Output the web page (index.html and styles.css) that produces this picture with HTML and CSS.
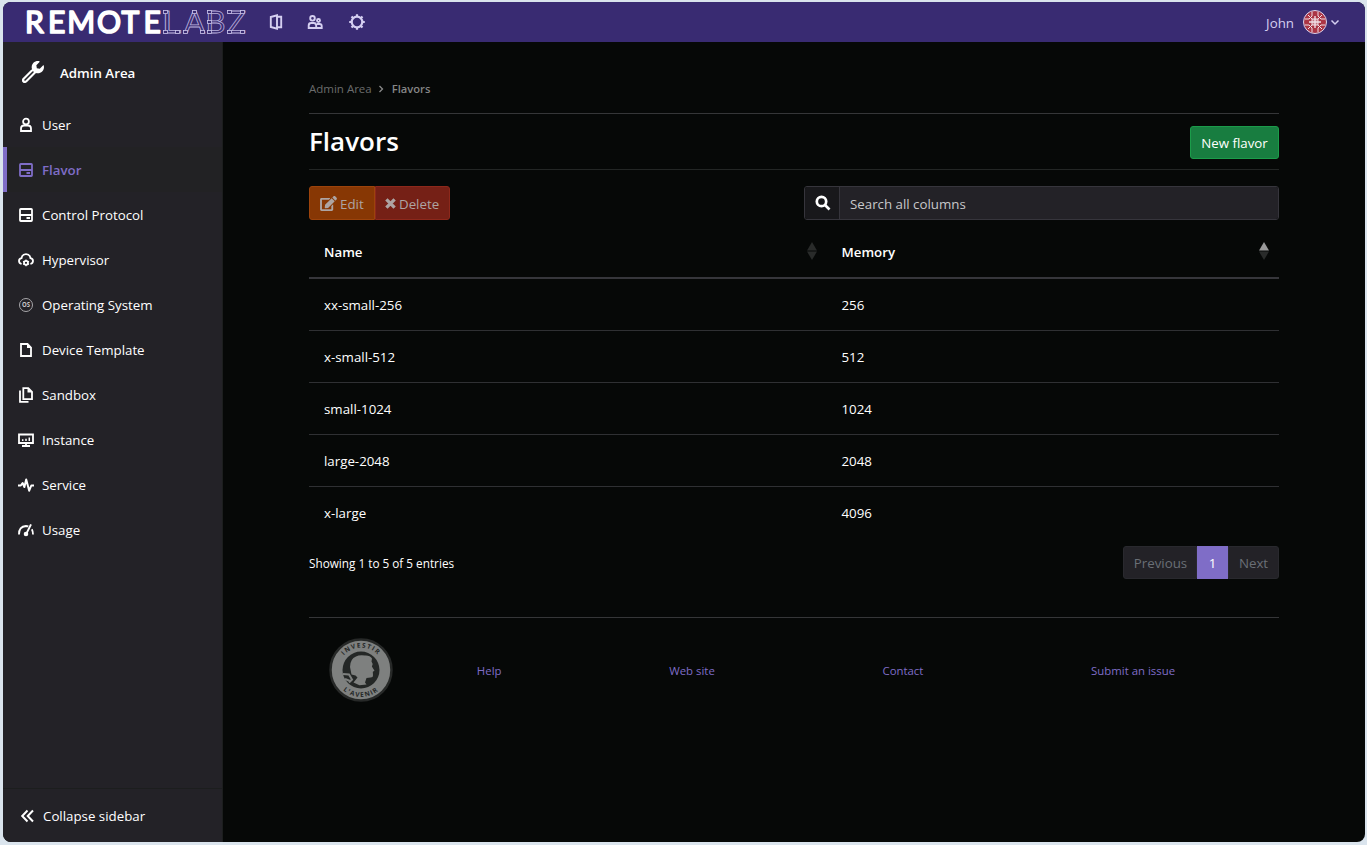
FILE: index.html
```html
<!DOCTYPE html>
<html lang="en">
<head>
<meta charset="utf-8">
<title>Flavors - RemoteLabz</title>
<link rel="stylesheet" href="styles.css">
</head>
<body>
<div class="window">
  <header class="navbar">
    <svg class="logo" width="226" height="32" viewBox="0 0 226 32">
      <text class="logo-bold" x="1.900 25 44.200 74 98.500 120.600" y="26.800">REMOTE</text>
      <g class="logo-thin">
        <text x="139" y="27" textLength="19" lengthAdjust="spacingAndGlyphs">L</text>
        <text x="161" y="27" textLength="21" lengthAdjust="spacingAndGlyphs">A</text>
        <text x="182.500" y="27" textLength="20" lengthAdjust="spacingAndGlyphs">B</text>
        <text x="204" y="27" textLength="19" lengthAdjust="spacingAndGlyphs">Z</text>
      </g>
      <g class="logo-nodes">
        <rect x="140.500" y="4.500" width="4" height="3"/><rect x="140.500" y="24.500" width="4" height="3"/><rect x="152.500" y="24.500" width="4" height="3"/>
        <rect x="160.500" y="24.500" width="4" height="3"/><rect x="169.500" y="4.500" width="4" height="3"/><rect x="177.500" y="24.500" width="4" height="3"/>
        <rect x="184.500" y="4.500" width="4" height="3"/><rect x="184.500" y="14.500" width="4" height="3"/><rect x="184.500" y="24.500" width="4" height="3"/>
        <rect x="204.500" y="4.500" width="4" height="3"/><rect x="217.500" y="4.500" width="4" height="3"/><rect x="204.500" y="24.500" width="4" height="3"/><rect x="217.500" y="24.500" width="4" height="3"/>
      </g>
    </svg>
    <nav class="top-links">
      <svg width="16" height="16" viewBox="0 0 16 16" class="stroke door"><path d="M2.800 3 9 1.300v13.400L2.800 13z"/><path d="M9 2.700h4.200v10.600H9"/></svg>
      <svg width="16" height="16" viewBox="0 0 16 16" class="stroke"><circle cx="4.500" cy="4.300" r="2.300"/><path d="M.7 14v-2.500q0-2.500 2.500-2.500h2.500q2.500 0 2.500 2.500V14z"/><circle cx="10.500" cy="6.500" r="1.500"/><path d="M9 10h2.500q2.200 0 2.200 2v2H8.500"/></svg>
      <svg width="18" height="18" viewBox="0 0 18 18" class="stroke gear"><circle cx="9" cy="9" r="5.300"/><path d="M9 1.200v2M9 14.800v2M1.200 9h2M14.800 9h2M3.500 3.500l1.400 1.400M13.100 13.100l1.400 1.400M3.500 14.500l1.400-1.400M13.100 4.900l1.400-1.400"/></svg>
    </nav>
    <div class="account">
      <span>John</span>
      <svg class="avatar" width="24" height="24" viewBox="0 0 24 24">
        <circle cx="12" cy="12" r="11.500" fill="#ab3545" stroke="#d9d4ee"/>
        <g fill="none" stroke="#f0dfe6" stroke-width="1"><path stroke-width="1.400" d="M12 6v12M6 12h12"/><path d="M9 2v4l-3 3H2M15 2v4l3 3h4M9 22v-4l-3-3H2M15 22v-4l3-3h4M5 5l4 4M19 5l-4 4M5 19l4-4M19 19l-4-4"/><rect x="9" y="9" width="6" height="6" fill="#f0dfe6" fill-opacity=".4"/></g>
      </svg>
      <svg width="10" height="7" viewBox="0 0 10 7" class="caret"><path d="M1.500 1.500 5 5l3.500-3.500"/></svg>
    </div>
  </header>
  <div class="body">
    <aside class="sidebar">
      <div class="side-title">
        <svg width="22" height="22" viewBox="0 0 512 512"><path fill="#fff" d="M507.730 109.100c-2.240-9.030-13.540-12.090-20.120-5.510l-74.360 74.360-67.880-11.310-11.310-67.880 74.360-74.360c6.620-6.620 3.430-17.900-5.660-20.160-47.380-11.740-99.550.910-136.580 37.930-39.640 39.640-50.550 97.100-34.050 147.200L18.740 402.760c-24.990 24.990-24.990 65.510 0 90.500 24.990 24.990 65.510 24.990 90.500 0l213.210-213.210c50.120 16.710 107.470 5.680 147.370-34.220 37.070-37.070 49.700-89.320 37.910-136.730z"/><path fill="none" stroke="#fff" stroke-width="40" stroke-linejoin="round" d="M232 218 30 420q-20 35 5 60 30 20 62-5L310 262"/><path stroke="#232227" stroke-width="38" stroke-linecap="round" d="M70 442 255 257"/></svg>
        <span>Admin Area</span>
      </div>
      <nav class="side-nav">
        <a class="side-item"><svg width="16" height="16" viewBox="0 0 16 16"><circle cx="8" cy="4.600" r="2.900"/><path d="M3 14v-2.500Q3 8.500 6 8.500h4q3 0 3 3V14z"/></svg><span>User</span></a>
        <a class="side-item active"><svg width="16" height="16" viewBox="0 0 16 16"><rect x="2" y="2" width="12" height="12" rx=".8"/><path d="M2 8h12"/><path d="M8.500 11h3.500"/></svg><span>Flavor</span></a>
        <a class="side-item"><svg width="16" height="16" viewBox="0 0 16 16"><rect x="2" y="2" width="12" height="12" rx=".8"/><path d="M2 8h12"/><path d="M8.500 11h3.500"/></svg><span>Control Protocol</span></a>
        <a class="side-item"><svg width="16" height="16" viewBox="0 0 16 16"><path d="M3.600 12Q1 11.300 1 9q0-2.300 2.500-2.800Q4.300 2.200 8 2.200t4.500 4Q15 6.700 15 9q0 2.300-2.600 3"/><circle cx="8" cy="10.800" r="2"/><path stroke-width="1.200" d="M8 7.500v2M8 12.200v2M5.100 9.200l1.500.9M9.500 11.600l1.500.8M5.100 12.400l1.500-.8M9.500 10.100l1.500-.9"/></svg><span>Hypervisor</span></a>
        <a class="side-item"><svg class="os" width="16" height="16" viewBox="0 0 16 16"><circle cx="8" cy="8" r="6.500"/><text x="4" y="10.200" textLength="8" lengthAdjust="spacingAndGlyphs">OS</text></svg><span>Operating System</span></a>
        <a class="side-item"><svg width="16" height="16" viewBox="0 0 16 16"><path d="M3 2h6.500L13 5.500V14H3z"/><path fill="#fff" stroke="none" d="M9 1.500v4.500h4.500z"/></svg><span>Device Template</span></a>
        <a class="side-item"><svg width="16" height="16" viewBox="0 0 16 16"><path d="M5.300 1.200h5L14 4.800v7.400H5.300zM2 3.500v11.300h8.500"/><path fill="#fff" stroke="none" d="M9.500 1v4.500H14z"/></svg><span>Sandbox</span></a>
        <a class="side-item"><svg width="16" height="16" viewBox="0 0 16 16"><path d="M1 2.500h14v8.500H1zM8 11v3M4 14h8"/><path stroke-width="1.500" d="M4.700 9V7.200M8 9V6.700M11.300 9V5.500"/></svg><span>Instance</span></a>
        <a class="side-item"><svg width="16" height="16" viewBox="0 0 16 16"><path stroke-width="2" stroke-linejoin="round" d="M0 8.500h2.800L4.600 6l1.800 4L8.200 2.500l3 11.200 2.100-5.200H16"/></svg><span>Service</span></a>
        <a class="side-item"><svg width="16" height="16" viewBox="0 0 16 16"><path d="M1 12.500Q.8 4.500 8 4q1.300 0 2.300.4M13.800 7.200q1.200 2 1.200 5.300"/><path stroke-width="1.900" d="M13 2.300 8.200 12"/><circle cx="8" cy="12" r="1.400" fill="#fff"/></svg><span>Usage</span></a>
      </nav>
      <div class="collapse"><svg width="14" height="14" viewBox="0 0 14 14"><path d="M6.500 1.500 1.200 7l5.300 5.500M12 1.500 6.700 7l5.300 5.500"/></svg><span>Collapse sidebar</span></div>
    </aside>
    <main class="main">
      <div class="content">
        <div class="breadcrumb"><span class="crumb">Admin Area</span><svg width="6" height="8" viewBox="0 0 6 8"><path d="M1.500 1 4.500 4l-3 3"/></svg><span class="here">Flavors</span></div>
        <div class="heading"><h1>Flavors</h1><a class="btn-new"><span>New flavor</span></a></div>
        <div class="toolbar">
          <div class="btn-group">
            <a class="btn-edit"><svg width="17" height="15" viewBox="0 0 576 512"><path d="M402.600 83.200l90.200 90.200c3.800 3.800 3.800 10 0 13.800L274.400 405.600l-92.800 10.300c-12.400 1.400-22.900-9.100-21.500-21.500l10.300-92.800L388.800 83.200c3.800-3.800 10-3.800 13.800 0zm162-22.900l-48.800-48.800c-15.200-15.200-39.900-15.200-55.200 0l-35.400 35.400c-3.800 3.800-3.800 10 0 13.800l90.200 90.200c3.800 3.800 10 3.800 13.800 0l35.400-35.400c15.200-15.300 15.200-40 0-55.200zM384 346.200V448H64V128h229.800c3.200 0 6.200-1.300 8.500-3.500l40-40c7.600-7.600 2.200-20.500-8.500-20.500H48C21.500 64 0 85.500 0 112v352c0 26.500 21.500 48 48 48h352c26.500 0 48-21.500 48-48V306.200c0-10.700-12.900-16-20.500-8.500l-40 40c-2.200 2.300-3.500 5.300-3.500 8.500z"/></svg><span>Edit</span></a>
            <a class="btn-delete"><svg width="11" height="11" viewBox="0 0 12 12"><path stroke="#ada4a3" stroke-width="3.600" d="M1.500 1.500l9 9M10.500 1.500l-9 9"/></svg><span>Delete</span></a>
          </div>
          <div class="search">
            <div class="search-icon"><svg width="16" height="16" viewBox="0 0 16 16"><circle cx="6.500" cy="6.500" r="4.700"/><path d="M10 10l4.500 4.500"/></svg></div>
            <div class="search-field"><span>Search all columns</span></div>
          </div>
        </div>
        <div class="table">
          <div class="row head"><div class="cell"><span>Name</span><svg class="sort" width="10" height="18" viewBox="0 0 10 18"><path d="M5 0l5 8.500H0z"/><path d="M0 9.500h10L5 18z"/></svg></div><div class="cell"><span>Memory</span><svg class="sort asc" width="10" height="18" viewBox="0 0 10 18"><path d="M5 0l5 8.500H0z"/><path d="M0 9.500h10L5 18z"/></svg></div></div>
          <div class="row"><div class="cell"><span>xx-small-256</span></div><div class="cell"><span>256</span></div></div>
          <div class="row"><div class="cell"><span>x-small-512</span></div><div class="cell"><span>512</span></div></div>
          <div class="row"><div class="cell"><span>small-1024</span></div><div class="cell"><span>1024</span></div></div>
          <div class="row"><div class="cell"><span>large-2048</span></div><div class="cell"><span>2048</span></div></div>
          <div class="row"><div class="cell"><span>x-large</span></div><div class="cell"><span>4096</span></div></div>
        </div>
        <div class="table-foot">
          <span class="info">Showing 1 to 5 of 5 entries</span>
          <div class="pages"><a class="prev">Previous</a><a class="current">1</a><a class="next">Next</a></div>
        </div>
        <footer class="footer">
          <svg width="64" height="64" viewBox="0 0 64 64">
            <defs><path id="arc-top" d="M9.500 32a22.500 22.500 0 0 1 45 0"/><path id="arc-bottom" d="M5 32a27 27 0 0 0 54 0"/></defs>
            <circle cx="32" cy="32" r="30.500" fill="#7e807f" stroke="#272928" stroke-width="2.500"/>
            <circle cx="32" cy="32" r="18.500" fill="#242726"/>
            <path fill="#7e807f" d="M21 29q0-8 6-10.500 3-1.700 9-1 5-.3 7 3l-.5 3 1.200 2.500-.8 2.500 2.600 4.200-1.700 1 .2 3.300q.2 2.500-2.500 2.500l-4 .5-1.500 4.500 1.500 2-7 .8-6-2.800 4-5-2-2-4-1z"/>
            <path fill="none" stroke="#7e807f" stroke-width="2" d="M14 36l6 .5 3 5-3 3M16 41l5 2"/>
            <text class="stamp"><textPath href="#arc-top" startOffset="50%">INVESTIR</textPath></text>
            <text class="stamp"><textPath href="#arc-bottom" startOffset="50%">L'AVENIR</textPath></text>
          </svg>
          <nav class="foot-links"><a>Help</a><a>Web site</a><a>Contact</a><a>Submit an issue</a></nav>
        </footer>
      </div>
    </main>
  </div>
</div>
</body>
</html>
```
FILE: styles.css
```css
* { box-sizing: border-box; }
html, body { height: 100%; }
body { margin: 0; padding: 2px 2px 3px 3px; background: #dae4ed; color: #fff; font: 13.3px/21px "Open Sans", "Noto Sans", sans-serif; overflow: hidden; }
h1 { margin: 0; }
svg { display: block; flex: none; overflow: visible; }
.window { height: 100%; display: flex; flex-direction: column; border-radius: 8px; overflow: hidden; background: #060807; }

.navbar { height: 40px; flex: none; display: flex; align-items: center; background: #392b72; color: #d5cff1; padding: 0 25px 0 20px; }
.logo { font-family: Lato, sans-serif; }
.logo-bold { font-size: 30px; font-weight: 400; fill: #fff; stroke: #fff; stroke-width: 1.7px; stroke-linejoin: round; }
.logo-thin { font-size: 30px; font-weight: 400; fill: none; stroke: #b9b0dd; stroke-width: .8px; }
.logo-nodes { fill: #392b72; stroke: #cdc5ec; stroke-width: .8px; }
.top-links { display: flex; align-items: center; gap: 24px; margin-left: 19px; }
.stroke { fill: none; stroke: #d5cff1; stroke-width: 1.9; }
.gear { stroke-width: 2.200; }
.account { margin-left: auto; display: flex; align-items: center; gap: 9px; }
.account .caret { margin-left: -6px; }
.caret { fill: none; stroke: #d5cff1; stroke-width: 1.5; }

.account span, .side-title span, .side-item span, .collapse span, .btn-new span, .btn-group span, .search-field span, .cell span, .pages a { padding-top: 2px; }

.body { flex: 1; display: flex; min-height: 0; }
.sidebar { width: 220px; flex: none; display: flex; flex-direction: column; background: #232227; border-right: 1px solid #1c1e1e; }
.side-title { height: 60px; display: flex; align-items: center; gap: 16px; padding-left: 19px; font-weight: 600; }
.side-nav { flex: 1; }
.side-item { height: 45px; display: flex; align-items: center; gap: 8px; padding-left: 11px; border-left: 4px solid transparent; }
.side-item svg { fill: none; stroke: #fff; stroke-width: 1.8; }
.side-item.active { background: #222224; border-color: #7f6dc7; color: #7f6dc7; font-weight: 600; }
.side-item.active svg { stroke: #7f6dc7; }
.side-item .os { stroke: #a7a6a9; stroke-width: 1; }
.os text { fill: #c8c7ca; stroke: none; font-size: 6.5px; font-weight: 700; }
.collapse { height: 54px; display: flex; align-items: center; gap: 8px; padding-left: 18px; border-top: 1px solid #1c1e1e; }
.collapse svg { fill: none; stroke: #fff; stroke-width: 2; }

.main { flex: 1; display: flex; justify-content: center; align-items: flex-start; }
.content { width: 970px; padding-top: 35px; }
.breadcrumb { height: 37px; display: flex; align-items: center; gap: 6px; padding-bottom: 13px; border-bottom: 1px solid #353638; font-size: 11.500px; color: #6b6c6c; }
.breadcrumb svg { fill: none; stroke: #8a8a8a; stroke-width: 1.3; }
.here { color: #858686; font-weight: 600; margin-left: 2px; font-size: 11.200px; }
.heading { height: 56px; display: flex; justify-content: space-between; align-items: center; border-bottom: 1px solid #232625; padding-top: 2px; }
.heading h1 { font-size: 26px; line-height: 34px; font-weight: 600; padding-bottom: 3px; }
.btn-new { width: 89px; height: 33px; display: flex; align-items: center; justify-content: center; border: 1px solid #1b9c4a; border-radius: 3px; background: #187d40; }
.toolbar { display: flex; justify-content: space-between; margin-top: 16px; height: 34px; }
.btn-group { display: flex; color: #ada4a3; }
.btn-edit, .btn-delete { display: flex; align-items: center; padding-left: 10px; border: 1px solid #9c430b; }
.btn-edit { width: 66px; gap: 3px; background: #873704; border-radius: 3px 0 0 3px; fill: #ada4a3; }
.btn-delete { width: 75px; gap: 3px; padding-left: 9px; background: #752016; border-color: #8d281b; border-radius: 0 3px 3px 0; }
.search { width: 475px; display: flex; border: 1px solid #36353c; border-radius: 3px; overflow: hidden; }
.search-icon { width: 35px; display: flex; align-items: center; justify-content: center; background: #18181b; border-right: 1px solid #36353c; padding-left: 1px; }
.search-icon svg { fill: none; stroke: #fff; stroke-width: 2.700; }
.search-field { flex: 1; display: flex; align-items: center; padding-left: 10px; background: #232227; color: #c8c8ca; }

.table { margin-top: 5px; }
.row { height: 52px; display: grid; grid-template-columns: 517.500px 452.500px; border-top: 1px solid #2f3033; }
.cell { display: flex; align-items: center; justify-content: space-between; padding: 0 10px 0 15px; }
.row.head { border-top: 0; font-weight: 600; }
.row.head + .row { border-top: 2px solid #36363b; height: 53px; }
.sort { fill: #292b2a; }
.asc path:first-child { fill: #9a9a9a; }

.table-foot { height: 33px; margin-top: 8px; display: flex; justify-content: space-between; align-items: center; }
.info { font-size: 11.750px; padding-top: 2px; }
.pages { display: flex; align-self: stretch; color: #6a6f76; }
.pages a { display: flex; align-items: center; justify-content: center; background: #232227; border: 1px solid #29292e; }
.pages .prev { width: 74px; border-radius: 3px 0 0 3px; padding-left: 1px; }
.pages .current { width: 31px; background: #7f6dc7; border-color: #7f6dc7; color: #fff; }
.pages .next { width: 51px; border-radius: 0 3px 3px 0; }

.footer { margin-top: 38px; border-top: 1px solid #353638; padding: 20px 20px 0; display: flex; align-items: center; }
.stamp { font-size: 6.5px; font-weight: 700; fill: #242726; text-anchor: middle; letter-spacing: 1.200px; }
.foot-links { flex: 1; display: flex; justify-content: space-around; font-size: 11.400px; color: #7f6dc7; }
```
